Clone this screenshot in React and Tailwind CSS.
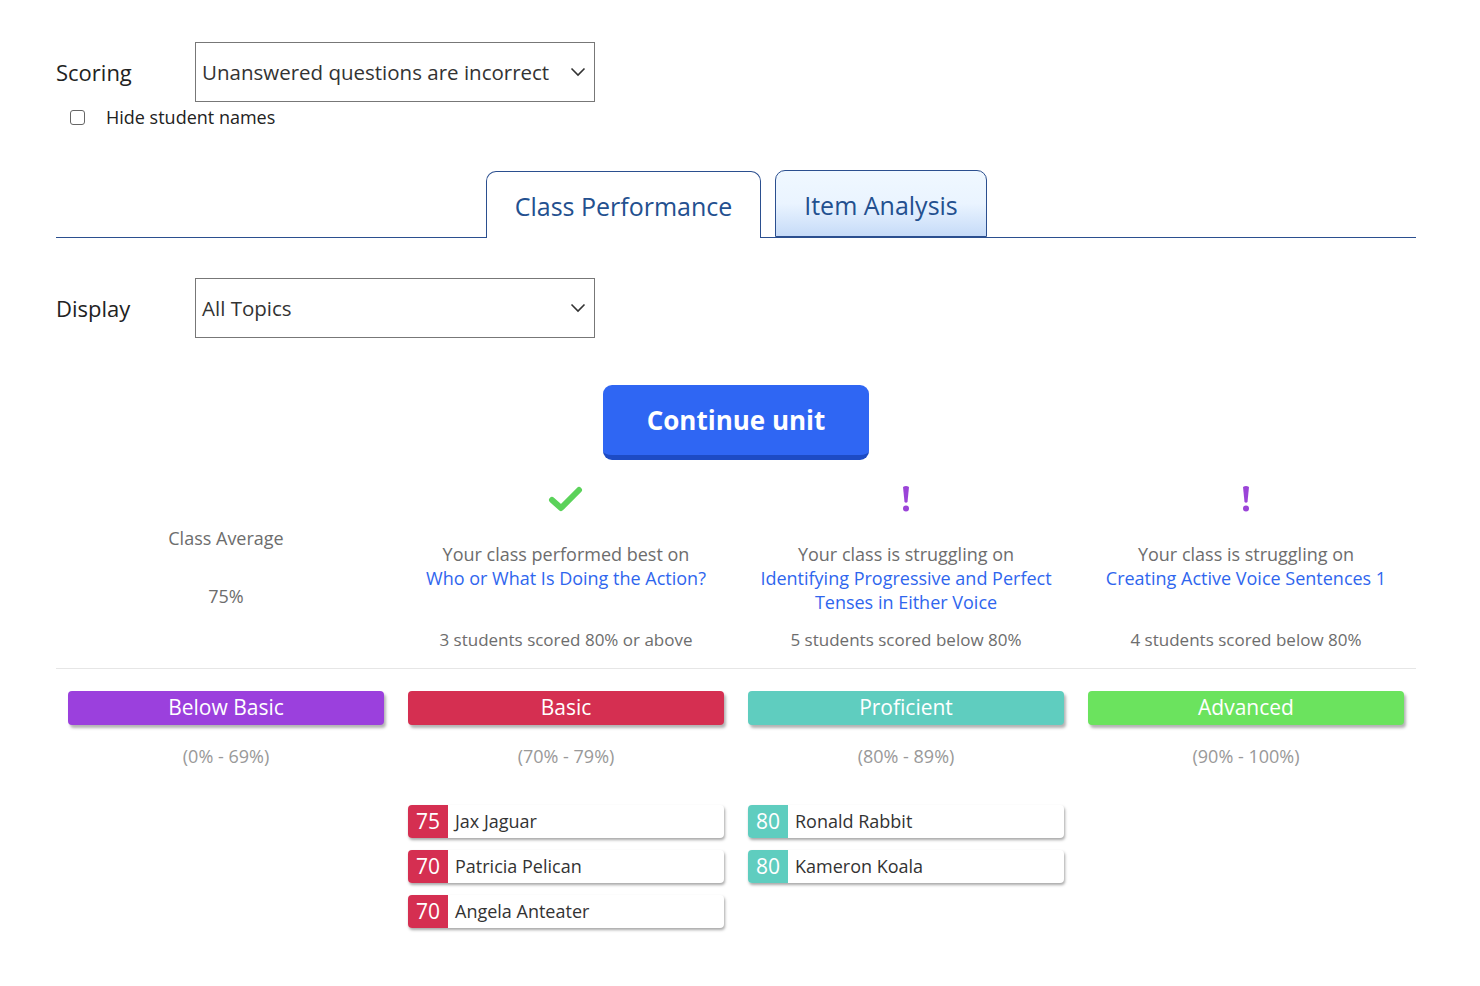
import React from 'react';

const font = { fontFamily: '"Open Sans", "Liberation Sans", sans-serif' };

const levels = [
  { name: 'Below Basic', range: '(0% - 69%)', color: 'bg-[#9b40dd]', students: [] },
  {
    name: 'Basic',
    range: '(70% - 79%)',
    color: 'bg-[#d52f51]',
    students: [
      { score: 75, name: 'Jax Jaguar' },
      { score: 70, name: 'Patricia Pelican' },
      { score: 70, name: 'Angela Anteater' },
    ],
  },
  {
    name: 'Proficient',
    range: '(80% - 89%)',
    color: 'bg-[#5fcdbf]',
    students: [
      { score: 80, name: 'Ronald Rabbit' },
      { score: 80, name: 'Kameron Koala' },
    ],
  },
  { name: 'Advanced', range: '(90% - 100%)', color: 'bg-[#6be35e]', students: [] },
];

const Chevron = () => (
  <svg width="18" height="18" viewBox="0 0 18 18" fill="none" stroke="#333" strokeWidth="1.6">
    <path d="M2.5 5.5 L9 12 L15.5 5.5" />
  </svg>
);

const SelectBox = ({ value }) => (
  <div className="flex h-[60px] w-[400px] items-center justify-between border border-[#777] pl-[6px] pr-[7px] text-[20.5px] text-[#333]">
    <span>{value}</span>
    <Chevron />
  </div>
);

const CheckIcon = () => (
  <svg width="36" height="28" viewBox="0 0 36 28" fill="none" stroke="#5bd25a" strokeWidth="6" strokeLinecap="round" strokeLinejoin="round">
    <path d="M4 15 L13 23 L31 5" />
  </svg>
);

const Exclaim = () => (
  <svg width="12" height="28" viewBox="0 0 12 28">
    <path d="M3 2 Q6 0 9 2 L7.5 17 Q6 18.5 4.5 17 Z" fill="#9b44d8" />
    <circle cx="6" cy="23.5" r="3" fill="#9b44d8" />
  </svg>
);

const Insight = ({ icon, lead, topic, footer }) => (
  <div className="flex flex-col items-center text-center">
    <div className="flex h-[30px] items-center">{icon}</div>
    <div className="mt-[28px] text-[18px] leading-[24px] text-[#6d6d6d]">{lead}</div>
    <div className="w-[310px] text-[18px] leading-[24px] text-[#2f66ee]">{topic}</div>
    <div className="mt-auto pt-[14px] text-[17px] leading-[24px] text-[#6d6d6d]">{footer}</div>
  </div>
);

export default function App() {
  return (
    <div style={font} className="min-h-[986px] bg-white pl-[56px] pt-[42px]">
      <div className="w-[1360px]">
        <div className="flex items-center">
          <div className="w-[139px] text-[22px] text-[#222]">Scoring</div>
          <SelectBox value="Unanswered questions are incorrect" />
        </div>
        <label className="mt-[2px] flex items-center text-[18px] text-[#222]">
          <span className="ml-[14px] mr-[21px] inline-block h-[15px] w-[15px] rounded-[3px] border border-[#666]" />
          Hide student names
        </label>

        <div className="mt-[39px] flex items-end border-b border-[#2b4f8f] pl-[430px]">
          <div className="-mb-px flex h-[67px] w-[275px] items-center justify-center rounded-t-[10px] border border-b-0 border-[#2b4f8f] bg-white pt-[4px] text-[25px] text-[#23508f]">
            Class Performance
          </div>
          <div className="ml-[14px] flex h-[67px] w-[212px] items-center justify-center rounded-t-[10px] border border-[#2b4f8f] bg-gradient-to-b from-[#f0f8ff] via-[#eaf4ff] to-[#c6dbf8] pt-[4px] text-[25px] text-[#23508f]">
            Item Analysis
          </div>
        </div>

        <div className="mt-[40px] flex items-center">
          <div className="w-[139px] text-[22px] text-[#222]">Display</div>
          <SelectBox value="All Topics" />
        </div>

        <div className="mt-[47px] flex justify-center">
          <button className="h-[75px] w-[266px] rounded-[9px] border-b-[5px] border-[#1d4bc4] bg-[#2f66f3] text-[26px] font-bold text-white">
            Continue unit
          </button>
        </div>

        <div className="mt-[24px] grid grid-cols-4 border-b border-[#e6e6e6] pb-[16px]">
          <div className="flex flex-col items-center pt-[42px] text-[18px] text-[#6d6d6d]">
            <div className="leading-[24px]">Class Average</div>
            <div className="mt-[34px] leading-[24px]">75%</div>
          </div>
          <Insight
            icon={<CheckIcon />}
            lead="Your class performed best on"
            topic="Who or What Is Doing the Action?"
            footer="3 students scored 80% or above"
          />
          <Insight
            icon={<Exclaim />}
            lead="Your class is struggling on"
            topic="Identifying Progressive and Perfect Tenses in Either Voice"
            footer="5 students scored below 80%"
          />
          <Insight
            icon={<Exclaim />}
            lead="Your class is struggling on"
            topic="Creating Active Voice Sentences 1"
            footer="4 students scored below 80%"
          />
        </div>

        <div className="mt-[22px] grid grid-cols-4">
          {levels.map((level) => (
            <div key={level.name} className="flex flex-col px-[12px]">
              <div className={`flex h-[34px] items-center justify-center rounded-[4px] text-[21px] text-white shadow-[2px_3px_3px_rgba(0,0,0,0.3)] ${level.color}`}>
                {level.name}
              </div>
              <div className="mt-[18px] text-center text-[18px] text-[#999]">{level.range}</div>
              <div className="mt-[35px] flex flex-col gap-[12px]">
                {level.students.map((s) => (
                  <div
                    key={s.name}
                    className="flex h-[33px] items-stretch overflow-hidden rounded-[4px] bg-white shadow-[1px_2px_3px_rgba(0,0,0,0.35)]"
                  >
                    <div className={`flex w-[40px] items-center justify-center text-[21px] text-white ${level.color}`}>
                      {s.score}
                    </div>
                    <div className="flex items-center pl-[7px] text-[18px] text-[#333]">{s.name}</div>
                  </div>
                ))}
              </div>
            </div>
          ))}
        </div>
      </div>
    </div>
  );
}
